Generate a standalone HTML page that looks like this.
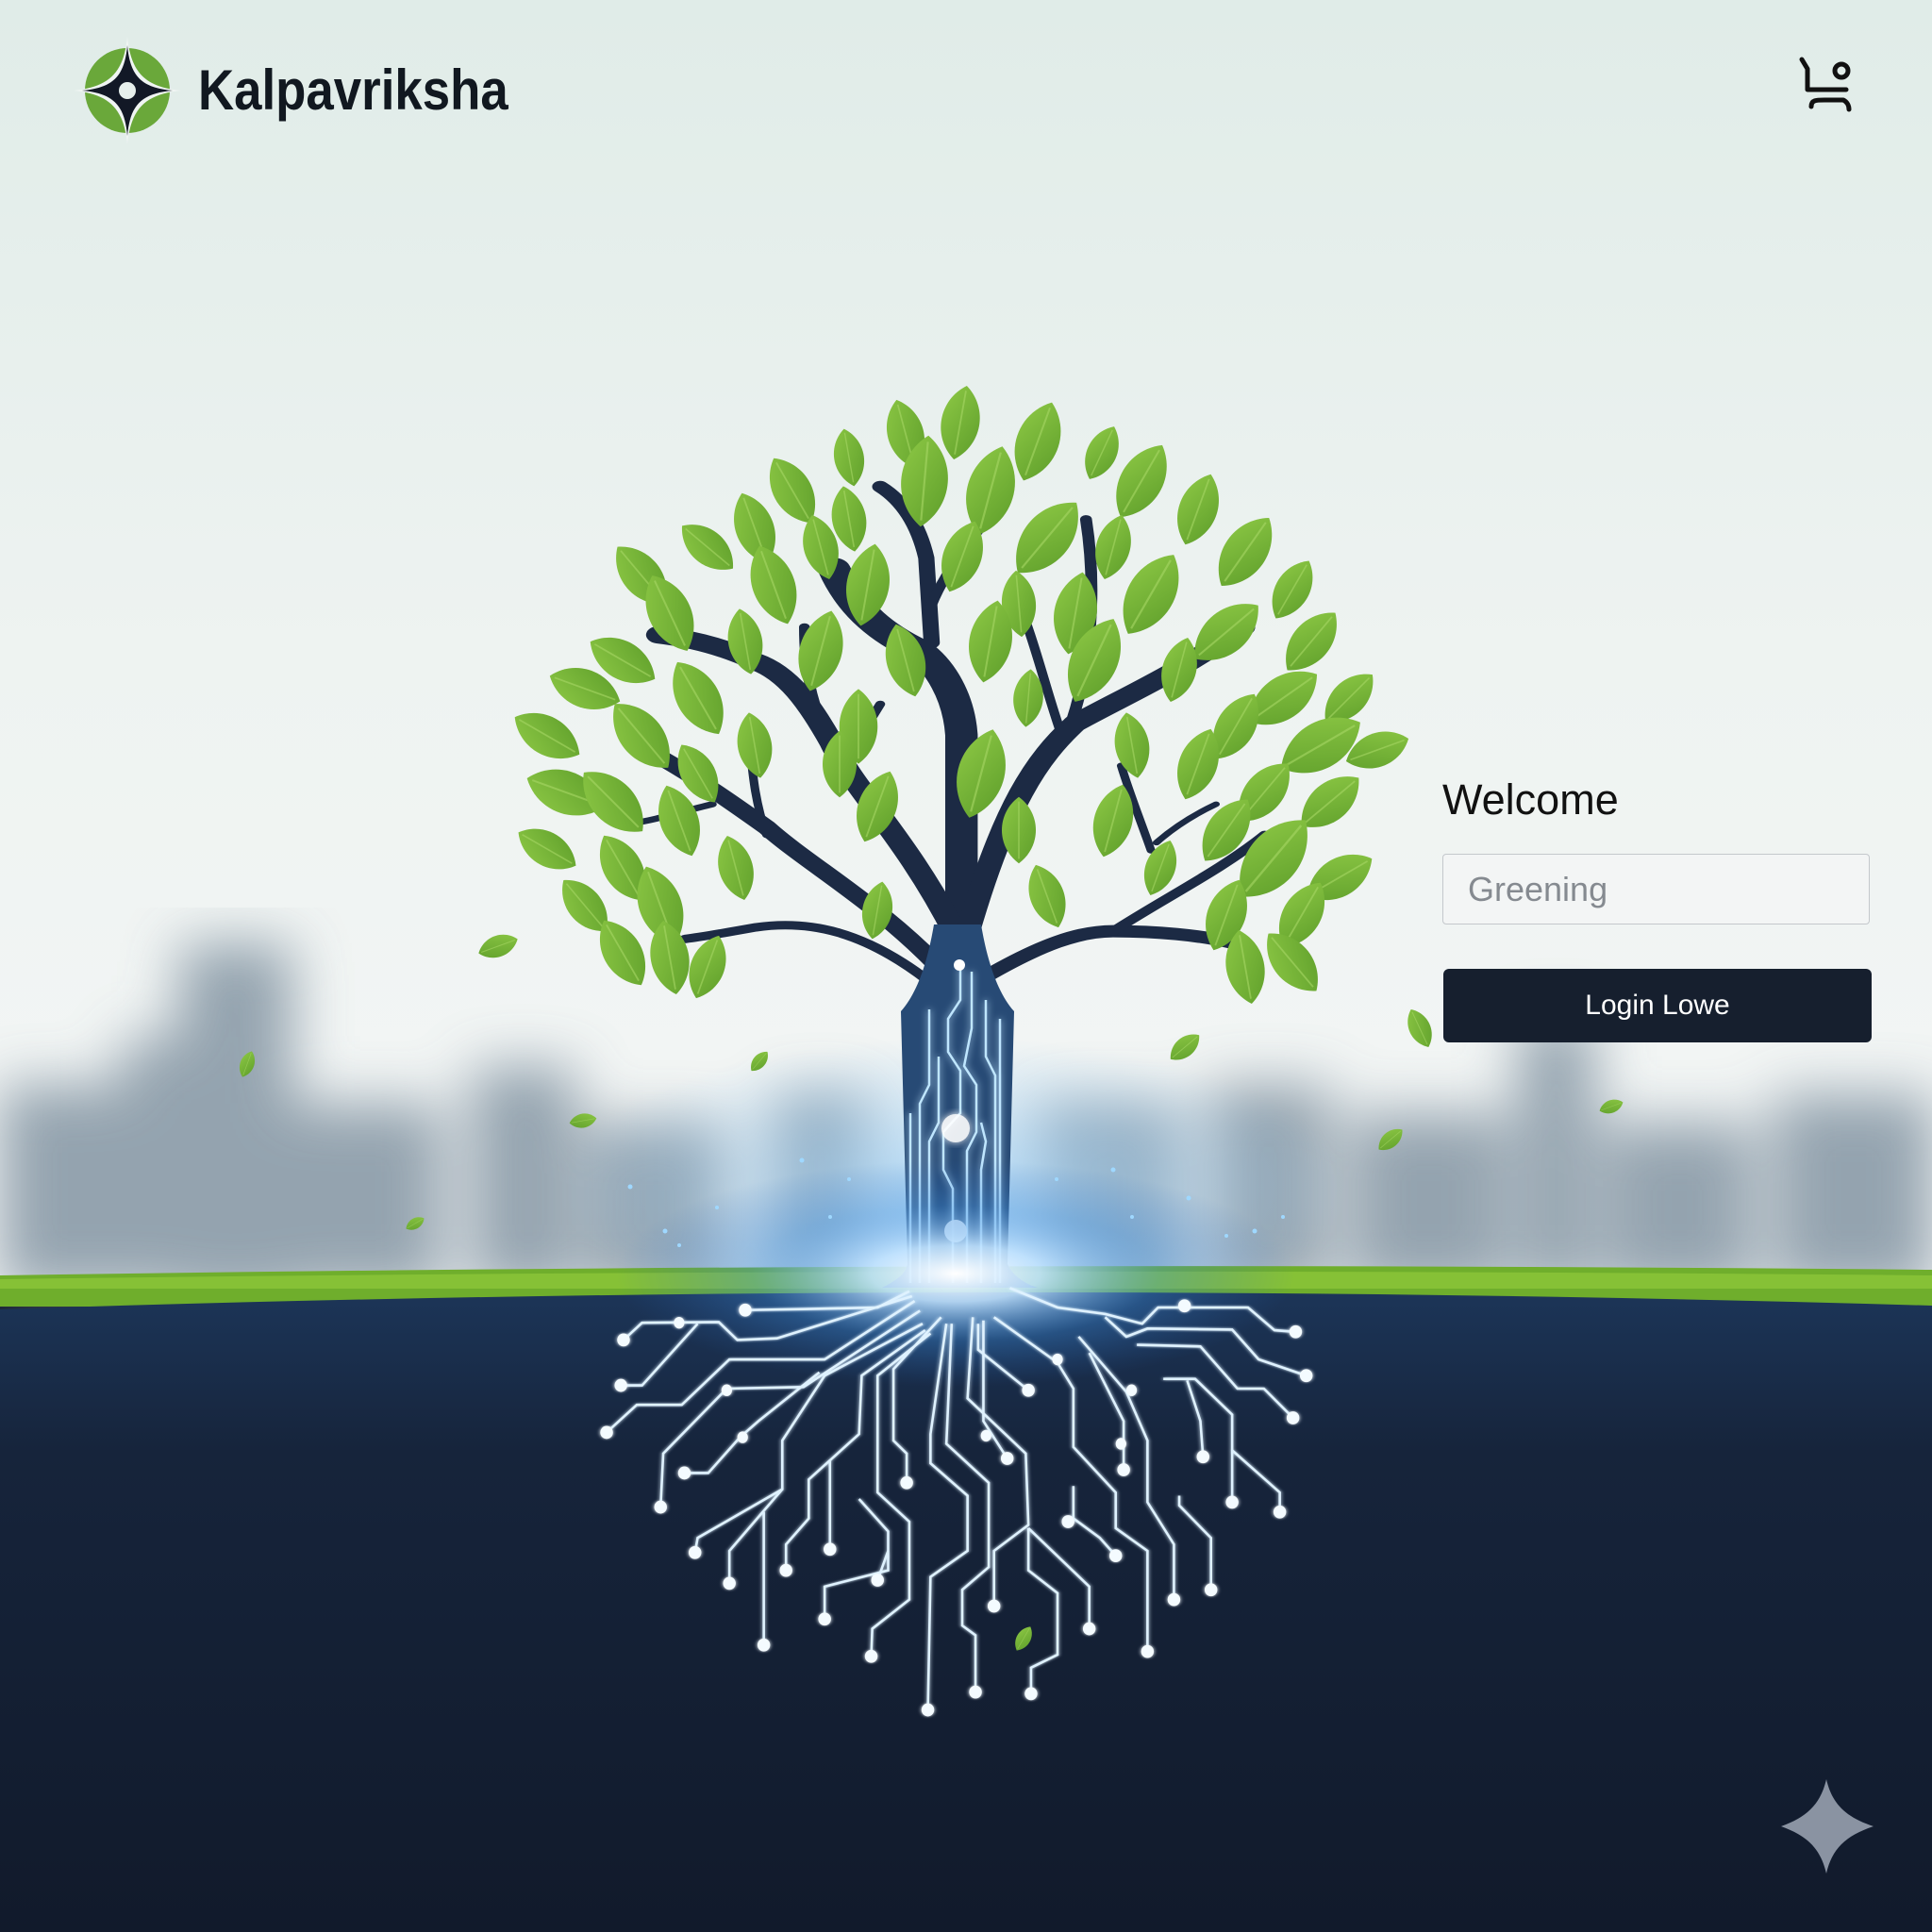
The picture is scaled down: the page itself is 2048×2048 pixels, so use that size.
<!DOCTYPE html>
<html><head><meta charset="utf-8"><style>
html,body{margin:0;padding:0;width:2048px;height:2048px;overflow:hidden;background:#121b2c;font-family:"Liberation Sans",sans-serif}
.abs{position:absolute}
</style></head><body>
<div class="abs" style="left:0;top:0;width:2048px;height:2048px">
<svg width="2048" height="2048" viewBox="0 0 2048 2048" class="abs" style="left:0;top:0">
<defs>
<linearGradient id="sky" x1="0" y1="0" x2="0" y2="1">
<stop offset="0" stop-color="#e0ece8"/><stop offset="0.5" stop-color="#eef3f1"/><stop offset="1" stop-color="#f4f6f6"/>
</linearGradient>
<linearGradient id="gnd" x1="0" y1="0" x2="0" y2="1">
<stop offset="0" stop-color="#1c3558"/><stop offset="0.25" stop-color="#16243b"/><stop offset="1" stop-color="#111a2b"/>
</linearGradient>
<radialGradient id="glow" cx="0.5" cy="0.5" r="0.5">
<stop offset="0" stop-color="#ffffff" stop-opacity="1"/><stop offset="0.25" stop-color="#bfe2ff" stop-opacity="0.9"/><stop offset="0.6" stop-color="#3d8fe0" stop-opacity="0.35"/><stop offset="1" stop-color="#2a6bc0" stop-opacity="0"/>
</radialGradient>
<radialGradient id="skyglow" cx="0.5" cy="0.5" r="0.5">
<stop offset="0" stop-color="#9fd0f5" stop-opacity="0.8"/><stop offset="1" stop-color="#9fd0f5" stop-opacity="0"/>
</radialGradient>
<linearGradient id="leafg" x1="0" y1="0" x2="1" y2="1">
<stop offset="0" stop-color="#8dc845"/><stop offset="1" stop-color="#5f9f2b"/>
</linearGradient>
<filter id="blur"><feGaussianBlur stdDeviation="30"/></filter>
<filter id="rglow" x="-20%" y="-20%" width="140%" height="140%"><feGaussianBlur stdDeviation="4" result="b"/><feMerge><feMergeNode in="b"/><feMergeNode in="SourceGraphic"/></feMerge></filter>
<g id="lf"><path d="M0,-44 C30,-22 30,22 0,44 C-30,22 -30,-22 0,-44Z" fill="url(#leafg)"/><path d="M0,-38 L0,38" stroke="#a7d765" stroke-width="2" opacity="0.6"/></g>
</defs>
<rect width="2048" height="1380" fill="url(#sky)"/>
<g filter="url(#blur)" fill="#7d8f9e" opacity="0.8">
<rect x="190" y="1000" width="120" height="380"/>
<rect x="0" y="1150" width="140" height="220"/>
<rect x="130" y="1100" width="90" height="270"/>
<rect x="300" y="1170" width="170" height="200"/>
<rect x="500" y="1130" width="110" height="240"/>
<rect x="620" y="1190" width="150" height="180"/>
<rect x="820" y="1160" width="100" height="210"/>
<rect x="1100" y="1170" width="150" height="200"/>
<rect x="1280" y="1150" width="130" height="220"/>
<rect x="1430" y="1180" width="170" height="190"/>
<rect x="1610" y="1080" width="80" height="290"/>
<rect x="1700" y="1190" width="160" height="180"/>
<rect x="1880" y="1160" width="170" height="210"/>
</g>
<ellipse cx="1010" cy="1260" rx="420" ry="160" fill="url(#skyglow)"/>
<path d="M0,1352 Q1024,1336 2048,1346 L2048,1385 L0,1385Z" fill="#6fae2c"/>
<path d="M0,1356 Q1024,1342 2048,1352 L2048,1366 L0,1366Z" fill="#8cc63a" opacity="0.8"/>
<path d="M0,1388 Q1024,1354 2048,1384 L2048,2048 L0,2048Z" fill="url(#gnd)"/>
<g transform="translate(560,420) scale(0.574,0.408)" fill="none" stroke="#1c2a44" stroke-linecap="round">
<path d="M800,1500 L800,880 C795,780 760,700 720,660 C660,620 600,560 565,450" stroke-width="60"/>
<path d="M745,640 L735,420 C720,330 690,270 650,235" stroke-width="30"/>
<path d="M740,560 C760,480 800,400 860,300" stroke-width="20"/>
<path d="M790,1400 C700,1150 600,1020 560,900 C520,800 480,720 420,690 C360,650 300,630 240,620" stroke-width="45"/>
<path d="M560,900 C520,800 510,700 510,600" stroke-width="20"/>
<path d="M580,960 L650,800" stroke-width="18"/>
<path d="M770,1500 C650,1320 520,1220 440,1120 C380,1060 300,980 220,920" stroke-width="38"/>
<path d="M340,1060 C280,1080 240,1100 190,1110" stroke-width="16"/>
<path d="M440,1140 C420,1060 415,990 410,920" stroke-width="16"/>
<path d="M740,1520 C620,1390 520,1360 420,1380 C360,1395 320,1405 290,1410" stroke-width="22"/>
<path d="M810,1400 C880,1060 940,940 1010,850 C1100,780 1200,720 1320,600" stroke-width="45"/>
<path d="M1000,860 C1040,700 1050,500 1030,320" stroke-width="22"/>
<path d="M985,880 C960,780 945,690 920,590" stroke-width="18"/>
<path d="M830,1520 C950,1420 1020,1390 1080,1390 C1160,1390 1240,1400 1300,1420" stroke-width="32"/>
<path d="M1080,1390 C1180,1300 1280,1230 1360,1140" stroke-width="22"/>
<path d="M1150,1180 C1130,1100 1110,1030 1095,960" stroke-width="16"/>
<path d="M1160,1160 C1200,1110 1240,1080 1270,1060" stroke-width="14"/>
</g>
<path d="M955,1072 C975,1050 985,1010 990,980 L1040,980 C1045,1010 1055,1050 1075,1072 L1068,1340 C1075,1355 1090,1362 1100,1365 L935,1365 C945,1360 960,1352 962,1340Z" fill="#274a75"/>
<g stroke="#bfe6ff" stroke-width="2.5" fill="none" filter="url(#rglow)">
<path d="M1018,1025 L1018,1060 L1005,1080 L1005,1115 L1018,1135 L1018,1180 L1000,1200 L1000,1240 L1010,1260 L1010,1360"/>
<path d="M1030,1030 L1030,1090 L1022,1130 L1035,1150 L1035,1200 L1025,1220 L1025,1360"/>
<path d="M985,1070 L985,1150 L975,1170 L975,1360"/>
<path d="M995,1120 L995,1190 L985,1210 L985,1360"/>
<path d="M1045,1060 L1045,1120 L1055,1140 L1055,1360"/>
<path d="M1060,1080 L1060,1360"/>
<path d="M1040,1190 L1045,1210 L1040,1240 L1040,1360"/>
<path d="M965,1180 L965,1360"/>
</g>
<circle cx="1013" cy="1196" r="15" fill="#ffffff" opacity="0.9" filter="url(#rglow)"/>
<circle cx="1017" cy="1023" r="6" fill="#fff"/>
<circle cx="1013" cy="1305" r="12" fill="#fff" opacity="0.9"/>
<g>
<use href="#lf" transform="translate(1018,448) rotate(10) scale(0.9)"/>
<use href="#lf" transform="translate(960,460) rotate(-15) scale(0.85)"/>
<use href="#lf" transform="translate(1100,468) rotate(20) scale(1)"/>
<use href="#lf" transform="translate(900,485) rotate(-10) scale(0.7)"/>
<use href="#lf" transform="translate(1168,480) rotate(25) scale(0.7)"/>
<use href="#lf" transform="translate(980,510) rotate(5) scale(1.1)"/>
<use href="#lf" transform="translate(1050,520) rotate(15) scale(1.1)"/>
<use href="#lf" transform="translate(1210,510) rotate(30) scale(1)"/>
<use href="#lf" transform="translate(840,520) rotate(-30) scale(0.9)"/>
<use href="#lf" transform="translate(900,550) rotate(-10) scale(0.8)"/>
<use href="#lf" transform="translate(1270,540) rotate(20) scale(0.9)"/>
<use href="#lf" transform="translate(800,560) rotate(-20) scale(0.9)"/>
<use href="#lf" transform="translate(1110,570) rotate(40) scale(1.1)"/>
<use href="#lf" transform="translate(750,580) rotate(-50) scale(0.8)"/>
<use href="#lf" transform="translate(870,580) rotate(-15) scale(0.8)"/>
<use href="#lf" transform="translate(1180,580) rotate(15) scale(0.8)"/>
<use href="#lf" transform="translate(1320,585) rotate(35) scale(1)"/>
<use href="#lf" transform="translate(1020,590) rotate(20) scale(0.9)"/>
<use href="#lf" transform="translate(680,610) rotate(-40) scale(0.9)"/>
<use href="#lf" transform="translate(820,620) rotate(-20) scale(1)"/>
<use href="#lf" transform="translate(920,620) rotate(10) scale(1)"/>
<use href="#lf" transform="translate(1080,640) rotate(-5) scale(0.8)"/>
<use href="#lf" transform="translate(1220,630) rotate(30) scale(1.1)"/>
<use href="#lf" transform="translate(1370,625) rotate(30) scale(0.8)"/>
<use href="#lf" transform="translate(710,650) rotate(-25) scale(1)"/>
<use href="#lf" transform="translate(1140,650) rotate(10) scale(1)"/>
<use href="#lf" transform="translate(1300,670) rotate(50) scale(1)"/>
<use href="#lf" transform="translate(660,700) rotate(-60) scale(0.9)"/>
<use href="#lf" transform="translate(790,680) rotate(-10) scale(0.8)"/>
<use href="#lf" transform="translate(1050,680) rotate(10) scale(1)"/>
<use href="#lf" transform="translate(1390,680) rotate(40) scale(0.9)"/>
<use href="#lf" transform="translate(870,690) rotate(15) scale(1)"/>
<use href="#lf" transform="translate(1160,700) rotate(25) scale(1.1)"/>
<use href="#lf" transform="translate(1250,710) rotate(15) scale(0.8)"/>
<use href="#lf" transform="translate(960,700) rotate(-15) scale(0.9)"/>
<use href="#lf" transform="translate(620,730) rotate(-70) scale(0.9)"/>
<use href="#lf" transform="translate(740,740) rotate(-30) scale(1)"/>
<use href="#lf" transform="translate(1090,740) rotate(5) scale(0.7)"/>
<use href="#lf" transform="translate(1360,740) rotate(55) scale(1)"/>
<use href="#lf" transform="translate(1430,740) rotate(45) scale(0.8)"/>
<use href="#lf" transform="translate(910,770) rotate(0) scale(0.9)"/>
<use href="#lf" transform="translate(1310,770) rotate(30) scale(0.9)"/>
<use href="#lf" transform="translate(580,780) rotate(-60) scale(0.9)"/>
<use href="#lf" transform="translate(680,780) rotate(-40) scale(1)"/>
<use href="#lf" transform="translate(800,790) rotate(-10) scale(0.8)"/>
<use href="#lf" transform="translate(1200,790) rotate(-10) scale(0.8)"/>
<use href="#lf" transform="translate(1040,820) rotate(15) scale(1.1)"/>
<use href="#lf" transform="translate(1400,790) rotate(60) scale(1.1)"/>
<use href="#lf" transform="translate(1460,795) rotate(70) scale(0.8)"/>
<use href="#lf" transform="translate(890,810) rotate(0) scale(0.8)"/>
<use href="#lf" transform="translate(740,820) rotate(-30) scale(0.8)"/>
<use href="#lf" transform="translate(1270,810) rotate(20) scale(0.9)"/>
<use href="#lf" transform="translate(600,840) rotate(-70) scale(1)"/>
<use href="#lf" transform="translate(650,850) rotate(-45) scale(1)"/>
<use href="#lf" transform="translate(930,855) rotate(20) scale(0.9)"/>
<use href="#lf" transform="translate(1340,840) rotate(40) scale(0.9)"/>
<use href="#lf" transform="translate(1410,850) rotate(50) scale(0.9)"/>
<use href="#lf" transform="translate(720,870) rotate(-20) scale(0.9)"/>
<use href="#lf" transform="translate(1080,880) rotate(0) scale(0.8)"/>
<use href="#lf" transform="translate(1180,870) rotate(15) scale(0.9)"/>
<use href="#lf" transform="translate(1300,880) rotate(35) scale(0.9)"/>
<use href="#lf" transform="translate(580,900) rotate(-60) scale(0.8)"/>
<use href="#lf" transform="translate(660,920) rotate(-30) scale(0.9)"/>
<use href="#lf" transform="translate(780,920) rotate(-15) scale(0.8)"/>
<use href="#lf" transform="translate(1230,920) rotate(20) scale(0.7)"/>
<use href="#lf" transform="translate(1350,910) rotate(40) scale(1.2)"/>
<use href="#lf" transform="translate(1420,930) rotate(60) scale(0.9)"/>
<use href="#lf" transform="translate(620,960) rotate(-40) scale(0.8)"/>
<use href="#lf" transform="translate(700,960) rotate(-20) scale(1)"/>
<use href="#lf" transform="translate(930,965) rotate(10) scale(0.7)"/>
<use href="#lf" transform="translate(1110,950) rotate(-20) scale(0.8)"/>
<use href="#lf" transform="translate(1300,970) rotate(20) scale(0.9)"/>
<use href="#lf" transform="translate(1380,970) rotate(30) scale(0.9)"/>
<use href="#lf" transform="translate(660,1010) rotate(-30) scale(0.9)"/>
<use href="#lf" transform="translate(710,1015) rotate(-10) scale(0.9)"/>
<use href="#lf" transform="translate(750,1025) rotate(20) scale(0.8)"/>
<use href="#lf" transform="translate(1320,1025) rotate(-10) scale(0.9)"/>
<use href="#lf" transform="translate(1370,1020) rotate(-40) scale(0.9)"/>
<use href="#lf" transform="translate(528,1003) rotate(70) scale(0.5)"/>
<use href="#lf" transform="translate(1256,1110) rotate(50) scale(0.45)"/>
<use href="#lf" transform="translate(1505,1090) rotate(-25) scale(0.5)"/>
<use href="#lf" transform="translate(1474,1208) rotate(50) scale(0.37)"/>
<use href="#lf" transform="translate(1708,1173) rotate(70) scale(0.3)"/>
<use href="#lf" transform="translate(618,1188) rotate(80) scale(0.33)"/>
<use href="#lf" transform="translate(262,1128) rotate(20) scale(0.33)"/>
<use href="#lf" transform="translate(805,1125) rotate(40) scale(0.3)"/>
<use href="#lf" transform="translate(440,1297) rotate(60) scale(0.25)"/>
<use href="#lf" transform="translate(1085,1737) rotate(30) scale(0.33)"/>
</g>
<ellipse cx="1013" cy="1350" rx="360" ry="120" fill="url(#glow)"/>
<g transform="translate(560,1300) scale(0.561,0.344)" fill="none" stroke="#dff2ff" stroke-width="2.6" filter="url(#rglow)">
<g>
<path vector-effect="non-scaling-stroke" d="M720,200 L660,250 L520,255 L410,258"/>
<path vector-effect="non-scaling-stroke" d="M725,215 L470,345 L395,350 L360,295 L215,297 L180,350"/>
<path vector-effect="non-scaling-stroke" d="M730,230 L560,410 L380,410 L290,550 L205,550 L148,635"/>
<path vector-effect="non-scaling-stroke" d="M320,300 L215,490 L175,490"/>
<path vector-effect="non-scaling-stroke" d="M740,260 L520,495 L375,500 L255,700 L250,865"/>
<path vector-effect="non-scaling-stroke" d="M550,450 L435,600 L400,650 L340,760 L295,760"/>
<path vector-effect="non-scaling-stroke" d="M745,300 L560,460 L480,660 L480,810 L320,960 L315,1005"/>
<path vector-effect="non-scaling-stroke" d="M750,320 L630,460 L625,640 L530,780 L530,900 L487,980 L487,1060"/>
<path vector-effect="non-scaling-stroke" d="M760,330 L660,460 L660,820 L720,910 L720,1150 L650,1240 L648,1325"/>
<path vector-effect="non-scaling-stroke" d="M780,280 L690,440 L690,660 L715,700 L715,790"/>
<path vector-effect="non-scaling-stroke" d="M790,300 L760,640 L760,730 L830,830 L830,1000 L760,1080 L755,1490"/>
<path vector-effect="non-scaling-stroke" d="M480,810 L380,1000 L380,1100"/>
<path vector-effect="non-scaling-stroke" d="M445,880 L445,1290"/>
<path vector-effect="non-scaling-stroke" d="M570,720 L570,995"/>
<path vector-effect="non-scaling-stroke" d="M625,840 L680,940 L680,1060 L560,1110 L560,1210"/>
<path vector-effect="non-scaling-stroke" d="M680,1000 L660,1090"/>
<path vector-effect="non-scaling-stroke" d="M800,300 L790,670 L870,790 L870,1050 L820,1120 L820,1230 L845,1260 L845,1435"/>
<path vector-effect="non-scaling-stroke" d="M840,280 L830,530 L940,700 L945,920 L880,1000 L880,1170"/>
<path vector-effect="non-scaling-stroke" d="M945,930 L1060,1110 L1060,1240"/>
<path vector-effect="non-scaling-stroke" d="M945,930 L945,1060 L1000,1130 L1000,1320 L950,1360 L950,1440"/>
<path vector-effect="non-scaling-stroke" d="M850,300 L850,380 L945,505"/>
<path vector-effect="non-scaling-stroke" d="M860,290 L860,600 L905,715"/>
<path vector-effect="non-scaling-stroke" d="M880,280 L1000,420 L1030,500 L1030,680 L1110,820 L1110,930 L1170,1000 L1170,1310"/>
<path vector-effect="non-scaling-stroke" d="M1030,800 L1030,900 L1080,960 L1110,1015"/>
<path vector-effect="non-scaling-stroke" d="M910,190 L1000,250 L1090,270 L1160,300 L1190,250 L1360,250 L1410,320 L1450,325"/>
<path vector-effect="non-scaling-stroke" d="M1090,280 L1130,340 L1170,315 L1330,318 L1380,410 L1470,460"/>
<path vector-effect="non-scaling-stroke" d="M1040,340 L1130,510 L1170,660 L1170,850 L1220,980 L1220,1150"/>
<path vector-effect="non-scaling-stroke" d="M1150,365 L1270,370 L1340,500 L1390,500 L1445,590"/>
<path vector-effect="non-scaling-stroke" d="M1200,470 L1260,470 L1330,580 L1330,690 L1420,820 L1420,880"/>
<path vector-effect="non-scaling-stroke" d="M1245,475 L1270,600 L1275,710"/>
<path vector-effect="non-scaling-stroke" d="M1230,830 L1230,860 L1290,960 L1290,1120"/>
<path vector-effect="non-scaling-stroke" d="M1060,390 L1125,600 L1125,750"/>
<path vector-effect="non-scaling-stroke" d="M1330,690 L1330,850"/>
</g>
<g fill="#f4fbff" stroke="none">
<ellipse cx="410" cy="258" rx="12" ry="20"/><ellipse cx="180" cy="350" rx="12" ry="20"/><ellipse cx="148" cy="635" rx="12" ry="20"/>
<ellipse cx="175" cy="490" rx="12" ry="20"/><ellipse cx="250" cy="865" rx="12" ry="20"/><ellipse cx="295" cy="760" rx="12" ry="20"/>
<ellipse cx="315" cy="1005" rx="12" ry="20"/><ellipse cx="487" cy="1060" rx="12" ry="20"/><ellipse cx="648" cy="1325" rx="12" ry="20"/>
<ellipse cx="715" cy="790" rx="12" ry="20"/><ellipse cx="755" cy="1490" rx="12" ry="20"/><ellipse cx="380" cy="1100" rx="12" ry="20"/>
<ellipse cx="445" cy="1290" rx="12" ry="20"/><ellipse cx="570" cy="995" rx="12" ry="20"/><ellipse cx="560" cy="1210" rx="12" ry="20"/>
<ellipse cx="660" cy="1090" rx="12" ry="20"/><ellipse cx="845" cy="1435" rx="12" ry="20"/><ellipse cx="880" cy="1170" rx="12" ry="20"/>
<ellipse cx="1060" cy="1240" rx="12" ry="20"/><ellipse cx="950" cy="1440" rx="12" ry="20"/><ellipse cx="945" cy="505" rx="12" ry="20"/>
<ellipse cx="905" cy="715" rx="12" ry="20"/><ellipse cx="1170" cy="1310" rx="12" ry="20"/><ellipse cx="1110" cy="1015" rx="12" ry="20"/>
<ellipse cx="1020" cy="910" rx="12" ry="20"/><ellipse cx="1450" cy="325" rx="12" ry="20"/><ellipse cx="1470" cy="460" rx="12" ry="20"/>
<ellipse cx="1220" cy="1150" rx="12" ry="20"/><ellipse cx="1445" cy="590" rx="12" ry="20"/><ellipse cx="1420" cy="880" rx="12" ry="20"/>
<ellipse cx="1275" cy="710" rx="12" ry="20"/><ellipse cx="1290" cy="1120" rx="12" ry="20"/><ellipse cx="1125" cy="750" rx="12" ry="20"/>
<ellipse cx="1330" cy="850" rx="12" ry="20"/><ellipse cx="1240" cy="245" rx="12" ry="20"/><ellipse cx="285" cy="297" rx="10" ry="18"/>
<ellipse cx="375" cy="505" rx="10" ry="18"/><ellipse cx="405" cy="650" rx="10" ry="18"/><ellipse cx="1000" cy="410" rx="10" ry="18"/>
<ellipse cx="1140" cy="505" rx="10" ry="18"/><ellipse cx="865" cy="645" rx="10" ry="18"/><ellipse cx="1120" cy="670" rx="10" ry="18"/>
</g>
</g>
<g fill="#9fd8ff">
<circle cx="668" cy="1258" r="2.5"/><circle cx="705" cy="1305" r="2.5"/><circle cx="760" cy="1280" r="2"/><circle cx="850" cy="1230" r="2.5"/>
<circle cx="880" cy="1290" r="2"/><circle cx="1180" cy="1240" r="2.5"/><circle cx="1200" cy="1290" r="2"/><circle cx="1260" cy="1270" r="2.5"/>
<circle cx="1300" cy="1310" r="2"/><circle cx="1330" cy="1305" r="2.5"/><circle cx="1360" cy="1290" r="2"/><circle cx="1120" cy="1250" r="2"/>
<circle cx="720" cy="1320" r="2"/><circle cx="900" cy="1250" r="2"/>
</g>
<path d="M1936,1886 C1942,1912 1956,1926 1986,1936 C1956,1946 1942,1960 1936,1986 C1930,1960 1916,1946 1888,1936 C1916,1926 1930,1912 1936,1886Z" fill="#8a93a2"/>
<g transform="translate(135,96)">
<circle r="45" fill="#6aa83a"/>
<path d="M0,-60 C4,-20 20,-4 60,0 C20,4 4,20 0,60 C-4,20 -20,4 -60,0 C-20,-4 -4,-20 0,-60Z" fill="#f0f5f3" transform="scale(0.95)"/>
<path d="M0,-48 C3,-15 15,-3 48,0 C15,3 3,15 0,48 C-3,15 -15,3 -48,0 C-15,-3 -3,-15 0,-48Z" fill="#121826"/>
<circle r="9" fill="#e6efec"/>
</g>
<g fill="none" stroke="#111" stroke-width="5" stroke-linecap="round" stroke-linejoin="round">
<path d="M1910,63 L1916,73 L1916,95 L1957,95"/>
<path d="M1920,113 C1920,106 1925,106 1934,106 L1954,106 C1958,108 1960,112 1960,116"/>
<circle cx="1952" cy="75" r="7"/>
</g>
</svg>
<div class="abs" style="left:210px;top:60px;font-size:60px;font-weight:bold;color:#111820;line-height:72px;transform:scaleX(0.88);transform-origin:0 0">Kalpavriksha</div>
<div class="abs" style="left:1529px;top:822px;font-size:45px;color:#111;line-height:52px">Welcome</div>
<div class="abs" style="left:1529px;top:905px;width:453px;height:75px;border:1.5px solid #c4c8cc;border-radius:4px;background:#f3f5f5;box-sizing:border-box"></div>
<div class="abs" style="left:1556px;top:921px;font-size:36px;color:#858a90;line-height:44px">Greening</div>
<div class="abs" style="left:1530px;top:1027px;width:454px;height:78px;background:#161f2e;border-radius:6px;color:#fff;font-size:30px;line-height:78px;text-align:center">Login Lowe</div>
</div>
</body></html>
